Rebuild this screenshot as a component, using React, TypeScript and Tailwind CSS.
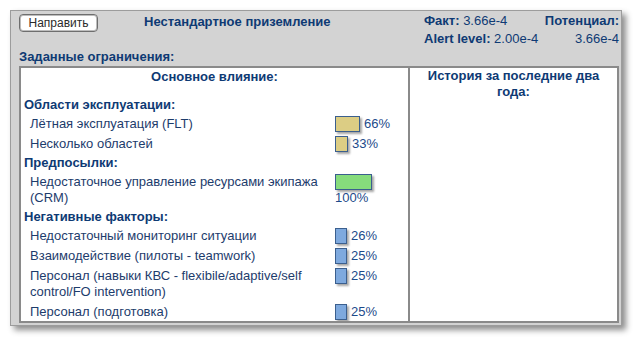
type Item = {
	label: string;
	pct: string;
	bar: number;
	color: string;
};

type Section = {
	title: string;
	items: Item[];
};

const sections: Section[] = [
	{
		title: "Области эксплуатации:",
		items: [
			{ label: "Лётная эксплуатация (FLT)", pct: "66%", bar: 25, color: "bg-[#dccd84]" },
			{ label: "Несколько областей", pct: "33%", bar: 13, color: "bg-[#dccd84]" },
		],
	},
	{
		title: "Предпосылки:",
		items: [
			{
				label: "Недостаточное управление ресурсами экипажа (CRM)",
				pct: "100%",
				bar: 37,
				color: "bg-[#86dc7c]",
			},
		],
	},
	{
		title: "Негативные факторы:",
		items: [
			{ label: "Недостаточный мониторинг ситуации", pct: "26%", bar: 12, color: "bg-[#7ea9de]" },
			{ label: "Взаимодействие (пилоты - teamwork)", pct: "25%", bar: 12, color: "bg-[#7ea9de]" },
			{
				label: "Персонал (навыки КВС - flexibile/adaptive/self control/FO intervention)",
				pct: "25%",
				bar: 12,
				color: "bg-[#7ea9de]",
			},
			{ label: "Персонал (подготовка)", pct: "25%", bar: 12, color: "bg-[#7ea9de]" },
		],
	},
];

function Row({ item }: { item: Item }) {
	return (
		<div className="flex items-start pl-[9px] py-[2px] leading-[16px]">
			<div className="w-[305px] text-[#1d3c6c]">{item.label}</div>
			<div className="w-[60px] flex flex-wrap items-center gap-x-[4px]">
				<div
					className={`h-[16px] ${item.color} border border-[#3b5f8e] shadow-[2px_2px_2px_rgba(0,0,0,0.35)]`}
					style={{ width: item.bar }}
				/>
				<span className="text-[#1d4a8a]">{item.pct}</span>
			</div>
		</div>
	);
}

export default function App() {
	return (
		<div className="bg-white w-[638px] h-[342px] p-[10px] font-['Liberation_Sans',Arial,sans-serif] text-[13px]">
			<div className="w-[612px] h-[316px] bg-[#d3d3d3] border border-[#9c9c9c] shadow-[4px_4px_6px_rgba(0,0,0,0.45)] pl-[8px] pr-[2px] pt-[1px] flex flex-col">
				<div className="flex items-start h-[36px]">
					<button className="mt-[2px] w-[79px] h-[18px] bg-white border border-[#6e6e6e] rounded-[4px] text-[12px] leading-[16px] text-[#2a2a2a] shadow-[inset_0_0_0_1px_#bdbdbd]">
						Направить
					</button>
					<div className="w-[326px] pl-[46px] pt-[1px] leading-[18px] font-bold text-[#0e3a74]">
						Нестандартное приземление
					</div>
					<div className="flex-1 flex justify-between leading-[18px] text-[#0e3a74]">
						<div>
							<div>
								<b>Факт:</b> 3.66e-4
							</div>
							<div>
								<b>Alert level:</b> 2.00e-4
							</div>
						</div>
						<div className="text-right">
							<div className="font-bold">Потенциал:</div>
							<div>3.66e-4</div>
						</div>
					</div>
				</div>
				<div className="leading-[18px] font-bold text-[#0e3a74]">Заданные ограничения:</div>
				<div className="flex h-[257px] bg-white border-2 border-[#8a8a8a] overflow-hidden">
					<div className="w-[389px] border-r-2 border-[#8a8a8a]">
						<div className="text-center font-bold leading-[18px] text-[#0e3a74]">
							Основное влияние:
						</div>
						<div className="mt-[10px]">
							{sections.map((s) => (
								<div key={s.title}>
									<div className="pl-[3px] leading-[18px] font-bold text-[#0e3a74]">{s.title}</div>
									{s.items.map((it) => (
										<Row key={it.label} item={it} />
									))}
								</div>
							))}
						</div>
					</div>
					<div className="flex-1 px-[12px] text-center font-bold leading-[16px] text-[#0e3a74]">
						История за последние два года:
					</div>
				</div>
			</div>
		</div>
	);
}
